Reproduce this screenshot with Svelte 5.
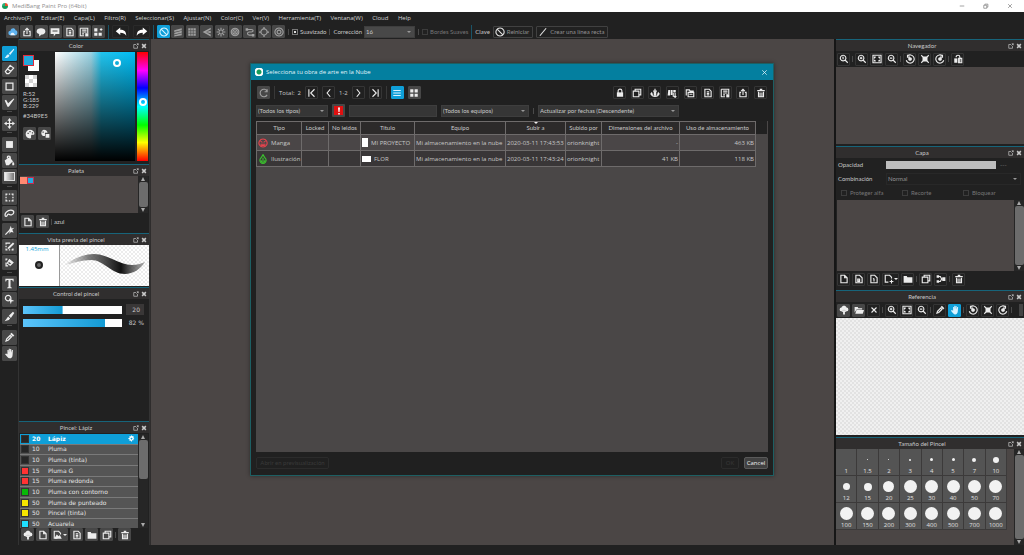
<script lang="ts">
  // s = stroked outline, f = filled shape, all on a 16x16 grid
  const icons: Record<string, { s?: string; f?: string }> = {
    share: { s: 'M5 7H3v7h10V7h-2M8 11V3M5 5l3-3 3 3' },
    bubble: { f: 'M8 2c4 0 7 2 7 5s-3 5-6 5l-4 3v-4C2 10 1 9 1 7c0-3 3-5 7-5z' },
    comment: { f: 'M1 2h14v9H9l-3 4v-4H1zM4 5v1h8V5zM4 7v1h8V7z' },
    doc: { s: 'M3 2h7l3 3v9H3zM6 6h4M6 8.500h4M6 11h4' },
    page: { s: 'M3 2h6l4 4v8H3zM9 2v4h4' },
    page8: { s: 'M3 2h6l4 4v8H3zM6 8h3v4H6zM6 10h3' },
    page1: { s: 'M3 2h6l4 4v8H3zM8 7v5M6.500 8L8 7' },
    pageAdd: { s: 'M12 7V5L9 2H2v11h5M12 9v6M9 12h6' },
    list: { s: 'M2 2h12v8M2 2v12h6M5 5h7M5 8h7M5 11h3', f: 'M10 10h5v5h-5z' },
    tiles: { s: 'M13 2v4M11 4h4', f: 'M2 2h5v5H2zM2 9h5v5H2zM9 9h5v5H9z' },
    undo: { f: 'M1 7l6-5v3c5 0 8 2 8 8-2-3-4-4-8-4v3z' },
    redo: { f: 'M15 7L9 2v3c-5 0-8 2-8 8 2-3 4-4 8-4v3z' },
    forbid: { s: 'M8 1.500a6.500 6.500 0 1 0 .1 0zM3.500 3.500l9 9' },
    slant: { f: 'M2 5l12-3v3L2 8zM2 9l12-3v3L2 12zM2 13l12-3v3L2 15z' },
    grid: { f: 'M2 2h5v5H2zM9 2h5v5H9zM2 9h5v5H2zM9 9h5v5H9z' },
    table: { s: 'M2 6h12M2 10h12M6 2v12M10 2v12', f: 'M2 2h12v12H2z' },
    vanish: { f: 'M1 8l13-7v3L6 8l8 4v3zM6 8l8-2v4z' },
    radial: { s: 'M8 1v5M8 10v5M1 8h5M10 8h5M3 3l3.500 3.500M9.500 9.500L13 13M13 3L9.500 6.500M6.500 9.500L3 13' },
    rings: { s: 'M8 2a6 6 0 1 0 .1 0zM8 4.500a3.500 3.500 0 1 0 .1 0z', f: 'M8 6.500a1.500 1.500 0 1 0 .1 0z' },
    curve: { s: 'M2 4h8c4 0 4 4 0 4H7c-4 0-4 5 0 5h6', f: 'M1 2h4v4H1zM11 11h4v4h-4z' },
    circle: { s: 'M8 3a5 5 0 1 0 .1 0z', f: 'M7 0h2v3H7zM7 13h2v3H7zM0 7h3v2H0zM13 7h3v2h-3z' },
    gear: { s: 'M8 1.500a6.500 6.500 0 1 0 .1 0zM8 5a3 3 0 1 0 .1 0z' },
    cog: { f: 'M7 1h2l.5 2 2-1 1.500 1.500-1 2 2 .5v2l-2 1 1 2-1.500 1.500-2-1L9 15H7l-.5-2.500-2 1L3 12l1-2-3-1V7l3-1-1-2 1.500-1.500 2 1zM8 6a2 2 0 1 0 .1 0z' },
    brush: { f: 'M14 1l1 1-6 8-2-2zM6 9l2 2c-1 3-4 4-7 3 2-1 2-4 5-5z' },
    eraser: { s: 'M9 2l5 4-7 8H4l-2-3zM5 7l5 4' },
    square: { s: 'M3 3h10v10H3z' },
    check: { f: 'M1 5l2-1 3 5 8-7 1 1-8 11H5z' },
    move: { s: 'M8 3v10M3 8h10', f: 'M8 0l3 4H5zM8 16l3-4H5zM0 8l4-3v6zM16 8l-4-3v6z' },
    fill: { f: 'M3 3h10v10H3z' },
    bucket: { s: 'M5 5V3c0-2 4-2 4 0v4', f: 'M1 8l7-5 5 6-6 6H3zM13 9c2 3 3 5 1 6s-3-2-1-6z' },
    select: { s: 'M3 5V3h2M7 3h2M11 3h2v2M13 7v2M13 11v2h-2M9 13H7M5 13H3v-2M3 9V7' },
    lasso: { s: 'M2 12c-2-4 3-9 8-9 6 0 5 6 1 7-3 1-3-2-5-1s-1 4-4 3z' },
    wand: { s: 'M2 14l7-7', f: 'M8 6l2-5 1 4 4-1-3 3 2 4-4-1-2 3V9z' },
    selPen: { s: 'M9 3H3v2M3 7v2M3 11v2h2M7 13h2M11 13h2v-2', f: 'M13 2l2 2-7 7-3 1 1-3z' },
    selErase: { s: 'M3 5V3h2M3 8v5h3M8 4l5 4-4 4-4-3z', f: 'M8 4l5 4-2 2-5-4z' },
    text: { f: 'M2 1h12v4h-1l-1-2H9.500v10l2 1v1h-7v-1l2-1V3H4L3 5H2z' },
    operate: { s: 'M6 2a4 4 0 1 0 .1 0z', f: 'M7 6l8 4-4 1-1 4z' },
    knife: { f: 'M13 1l2 2-5 7-3-3zM6 8l3 3-2 2-6 2z' },
    dropper: { s: 'M3 13l1-3 5-5 2 2-5 5z', f: 'M9 3l2-2 4 4-2 2z' },
    hand: { f: 'M5 9V3h1.500v4L7 1h1.500v6L9 1.500h1.500V7l1-4H13l-.5 7c0 3-2 5-4 5-3 0-4-3-7-6l1.500-1z' },
    palette: { f: 'M8 1c4 0 7 3 7 6 0 4-4 1-5 3s1 5-2 5c-4 0-7-3-7-7s3-7 7-7zM4 6v2h2V6zM7 3v2h2V3zM11 5v2h2V5z' },
    palette2: { f: 'M6 1c4 0 6 3 6 5H8v5H5C1 9 1 3 6 1zM9 8h6v6H9zM4 4v2h2V4z' },
    trash: { s: 'M4 6v8h8V6M6.500 7v6M9.500 7v6', f: 'M2 3h4V1h4v2h4v2H2z' },
    cloudUp: { f: 'M4 10a3 3 0 0 1 0-6c1-4 7-4 8 0a3 3 0 0 1 0 6h-2l-2-3-2 3zM8 7l4 4H9.500v4h-3v-4H4z' },
    folder: { f: 'M1 3h5l1 2h8v9H1z' },
    folderOpen: { f: 'M1 3h5l1 2h6v2H4l-3 5zM4 8h12l-2 6H2z' },
    copy: { s: 'M2 5h9v9H2zM5 5V2h9v9h-3' },
    image: { s: 'M12 7V5L9 2H2v11h5', f: 'M3 12l3-5 3 3 2-2 3 6H3z' },
    merge: { s: 'M4 4h3l2 4h3M4 12h3l2-4', f: 'M1 2h4v4H1zM1 10h4v4H1zM10 5h5v6h-5z' },
    reload: { s: 'M13 5a6 6 0 1 0 0 6M13 2v4H9' },
    first: { s: 'M3 2v12M12 2L6 8l6 6' },
    prev: { s: 'M10 2L5 8l5 6' },
    next: { s: 'M6 2l5 6-5 6' },
    last: { s: 'M13 2v12M4 2l6 6-6 6' },
    lines: { s: 'M2 4h12M2 8h12M2 12h12' },
    lock: { s: 'M5 8V4.500c0-3.500 6-3.500 6 0V8', f: 'M3 7h10v7H3z' },
    anchor: { s: 'M8 1v12M5 5h6M2 9c1 6 11 6 12 0', f: 'M6 6h4v6H6zM0 10l3-4 2 5zM16 10l-3-4-2 5z' },
    people: { s: 'M10 8v6M13 8v7M11 13l2 2 2-2', f: 'M2 3h3v9H1zM6 3h3v8H6zM10 3h4v4h-4z' },
    openDoc: { s: 'M2 12V3h5l1 2h6M5 7h9v7H5zM7 10h5' },
    zoomReset: { s: 'M6.500 2a4.500 4.500 0 1 0 .1 0zM10 10l4 4M6.500 4.500v4M5.500 5.500l1-1' },
    zoomIn: { s: 'M6.500 2a4.500 4.500 0 1 0 .1 0zM10 10l4 4M4.500 6.500h4M6.500 4.500v4' },
    zoomOut: { s: 'M6.500 2a4.500 4.500 0 1 0 .1 0zM10 10l4 4M4.500 6.500h4' },
    fit: { s: 'M1.500 2h13v12h-13zM4 7V5h2M10 5h2v2M12 9v2h-2M6 11H4V9' },
    rotL: { s: 'M4 3a6.500 6.500 0 1 1-2 7M4 1v4h4', f: 'M8 5a3 3 0 1 0 .1 0z' },
    rotR: { s: 'M12 3a6.500 6.500 0 1 0 2 7M12 1v4H8', f: 'M8 5a3 3 0 1 0 .1 0z' },
    reset: { s: 'M2 2l3 3M14 2l-3 3M2 14l3-3M14 14l-3-3', f: 'M4 4h8v8H4z' },
    flip: { s: 'M5 5c0-4 6-4 6 0v8M9 7h5v7H9z', f: 'M2 7h5v7H2z' },
    cross: { s: 'M4 4l8 8M12 4l-8 8' },
    float: { s: 'M8 4H2v10h10V8M10 2h4v4M14 2L9 7' },
    close: { s: 'M3 3l10 10M13 3L3 13' },
    alert: { f: 'M6 1h4l-1 9H7zM6.500 12h3v3h-3z' },
    line: { s: 'M3 14L13 2' },
    min: { s: 'M2 8h12' },
    max: { s: 'M2 6h8v8H2zM5 6V3h8v8h-3' },
    manga: { s: 'M8 1.500a6.500 6.500 0 1 0 .1 0zM4 5l3 2M12 5L9 7M4 10h8M5 12h6' },
    illus: { s: 'M8 1l3 5a5 5 0 1 1-6 0zM5 10a3 3 0 0 0 6 0M8 6v5' },
  };

  const menus = ['Archivo(F)', 'Editar(E)', 'Capa(L)', 'Filtro(R)', 'Seleccionar(S)', 'Ajustar(N)',
    'Color(C)', 'Ver(V)', 'Herramienta(T)', 'Ventana(W)', 'Cloud', 'Help'];
  const fileTools = ['share', 'bubble', 'comment', 'doc', 'list', 'tiles'];
  const snapTools = ['forbid', 'slant', 'table', 'vanish', 'radial', 'rings', 'curve', 'circle', 'gear'];
  const tools = ['brush', 'eraser', 'square', 'check', '', 'move', '', 'fill', 'bucket', 'gradient', '',
    'select', 'lasso', 'wand', 'selPen', 'selErase', '', 'text', 'operate', 'knife', '', 'dropper', 'hand'];
  const cloudTools = ['lock', 'copy', 'anchor', 'people', 'openDoc', 'doc', 'list', 'share', 'trash'];

  const brushes = [
    { color: '#262626', size: 20, name: 'Lápiz' },
    { color: '#262626', size: 10, name: 'Pluma' },
    { color: '#262626', size: 10, name: 'Pluma (tinta)' },
    { color: '#ff3333', size: 15, name: 'Pluma G' },
    { color: '#ff3333', size: 15, name: 'Pluma redonda' },
    { color: '#08b808', size: 10, name: 'Pluma con contorno' },
    { color: '#f5e500', size: 50, name: 'Pluma de punteado' },
    { color: '#f5e500', size: 50, name: 'Pincel (tinta)' },
    { color: '#1fe0ff', size: 50, name: 'Acuarela' },
  ];

  // label and drawn diameter of each preset
  const sizes: [string, number][] = [
    ['1', 0], ['1.5', 1], ['2', 1], ['3', 2], ['4', 3], ['5', 3], ['7', 4], ['10', 6],
    ['12', 7], ['15', 8], ['20', 11], ['25', 13], ['30', 13], ['40', 13], ['50', 13], ['70', 13],
    ['100', 13], ['150', 13], ['200', 13], ['300', 13], ['400', 13], ['500', 13], ['700', 13], ['1000', 13],
  ];

  const works = [
    { icon: 'manga', type: 'Manga', title: 'MI PROYECTO', date: '2020-03-11 17:43:53', dim: '-', usage: '463 KB' },
    { icon: 'illus', type: 'Ilustración', title: 'FLOR', date: '2020-03-11 17:43:24', dim: '41 KB', usage: '118 KB' },
  ];

  let activeTool = $state('brush');
  let activeBrush = $state(0);
  let brushSize = $state(40);
  let brushOpacity = $state(83);
</script>

{#snippet icon(name: string)}
  <svg class="icon" viewBox="0 0 16 16" aria-hidden="true">
    {#if icons[name].f}<path class="solid" fill-rule="evenodd" d={icons[name].f} />{/if}
    {#if icons[name].s}<path class="outline {name}" d={icons[name].s} />{/if}
  </svg>
{/snippet}

{#snippet btn(name: string, cls = '')}
  <button type="button" class="icon-button {cls}" aria-label={name}>{@render icon(name)}</button>
{/snippet}

{#snippet header(title: string)}
  <header class="panel-header">
    <h2>{title}</h2>
    <button type="button" class="plain" aria-label="float">{@render icon('float')}</button>
    <button type="button" class="plain bold" aria-label="close">{@render icon('close')}</button>
  </header>
{/snippet}

{#snippet scrollbar(cls = '')}
  <div class="scrollbar {cls}">
    <i class="up"></i>
    <i class="thumb"></i>
    <i class="down"></i>
  </div>
{/snippet}

<div class="app">
  <div class="titlebar">
    <span class="logo"></span>
    <h1>MediBang Paint Pro (64bit)</h1>
    <button type="button" class="plain" aria-label="minimize">{@render icon('min')}</button>
    <button type="button" class="plain" aria-label="maximize">{@render icon('max')}</button>
    <button type="button" class="plain" aria-label="close">{@render icon('close')}</button>
  </div>

  <nav class="menubar">
    {#each menus as menu}
      <button type="button">{menu}</button>
    {/each}
  </nav>

  <div class="toolbar">
    <div class="tools file-tools">
      <button type="button" class="icon-button raised" aria-label="cloud">
        <svg class="icon" viewBox="0 0 16 16" aria-hidden="true">
          <path fill="#5fb3f0" d="M4 13a3.500 3.500 0 0 1 0-7c1-5 7-5 8-1 4 0 4 8 0 8z" />
          <path fill="#e8f4ff" d="M4 12c0-3 5-4 6-1l2 2H4z" />
        </svg>
      </button>
      {#each fileTools as name}
        {@render btn(name, 'raised')}
      {/each}
    </div>
    <i class="bar"></i>
    <div class="tools history">
      {@render btn('undo', 'wide')}
      {@render btn('redo', 'wide')}
    </div>
    <i class="bar"></i>
    <div class="tools snap-tools">
      {#each snapTools as name}
        {@render btn(name, name === 'forbid' ? 'active' : 'raised dim')}
      {/each}
    </div>
    <i class="tick"></i>
    <label class="check"><input type="checkbox" checked />Suavizado</label>
    <i class="tick"></i>
    <label class="field">Corrección
      <span class="select correction"><select><option>16</option></select></span>
    </label>
    <i class="tick"></i>
    <label class="check off"><input type="checkbox" disabled />Bordes Suaves</label>
    <i class="bar"></i>
    <div class="field keys">
      <span>Clave</span>
      <button type="button" class="text-button">{@render icon('forbid')}Reiniciar</button>
      <button type="button" class="text-button">{@render icon('line')}Crear una línea recta</button>
    </div>
  </div>

  <main>
    <div class="toolbox">
      {#each tools as tool}
        {#if tool === ''}
          <i class="divider"></i>
        {:else}
          <button
            type="button"
            class="icon-button raised tool"
            class:active={activeTool === tool}
            aria-label={tool}
            onclick={() => (activeTool = tool)}
          >
            {#if tool === 'gradient'}<span class="gradient"></span>{:else}{@render icon(tool)}{/if}
          </button>
        {/if}
      {/each}
    </div>

    <aside class="left">
      <section class="color-panel">
        {@render header('Color')}
        <div class="color-body">
          <div class="color-info">
            <div class="swatches"><span class="front"></span><span class="back"></span></div>
            <span class="transparent"></span>
            <p>R:52<br />G:185<br />B:229</p>
            <p>#34B9E5</p>
            <div class="row">
              {@render btn('palette', 'raised')}
              {@render btn('palette2', 'raised')}
            </div>
          </div>
          <div class="spectrum"><span class="picker"></span></div>
          <div class="hue"><span class="picker"></span></div>
        </div>
      </section>

      <section class="palette-panel">
        {@render header('Paleta')}
        <div class="palette-body">
          <div class="palette-area"><span class="salmon"></span><span class="blue"></span></div>
          {@render scrollbar()}
        </div>
        <div class="row palette-actions">
          {@render btn('page', 'raised')}
          {@render btn('trash', 'raised')}
          <i class="tick"></i>
          <span>azul</span>
        </div>
      </section>

      <section class="preview-panel">
        {@render header('Vista previa del pincel')}
        <div class="preview-body">
          <div class="tip">
            <span>1.45mm</span>
            <i></i>
          </div>
          <svg viewBox="0 0 89 41" preserveAspectRatio="none" aria-hidden="true">
            <defs>
              <linearGradient id="stroke-fade">
                <stop offset="0" stop-color="#666" stop-opacity="0.100" />
                <stop offset="0.300" stop-color="#444" stop-opacity="0.700" />
                <stop offset="0.700" stop-color="#111" />
                <stop offset="1" stop-color="#444" stop-opacity="0.400" />
              </linearGradient>
            </defs>
            <path
              fill="url(#stroke-fade)"
              d="M5 20C14 13 24 9 34 9c14 0 25 11 38 11 5 0 8-1 13-3-4 7-12 12-20 12-14 0-21-14-34-14-9 0-17 3-26 5z"
            />
          </svg>
        </div>
      </section>

      <section class="control-panel">
        {@render header('Control del pincel')}
        <div class="control-row">
          <input type="range" aria-label="size" bind:value={brushSize} style="--fill: {brushSize}%" />
          <output class="box">20</output>
        </div>
        <div class="control-row">
          <input type="range" aria-label="opacity" bind:value={brushOpacity} style="--fill: {brushOpacity}%" />
          <output>82 %</output>
        </div>
      </section>

      <section class="brush-panel">
        {@render header('Pincel: Lápiz')}
        <div class="brush-body">
          <ul>
            {#each brushes as brush, i}
              <li class:current={activeBrush === i}>
                <button type="button" onclick={() => (activeBrush = i)}>
                  <i style="background: {brush.color}"></i>
                  <b>{brush.size}</b>
                  <span>{brush.name}</span>
                  {#if activeBrush === i}{@render icon('cog')}{/if}
                </button>
              </li>
            {/each}
          </ul>
          {@render scrollbar('short')}
        </div>
        <div class="row brush-actions">
          {@render btn('cloudUp', 'raised')}
          {@render btn('page', 'raised')}
          {@render btn('image', 'raised menu')}
          {@render btn('doc', 'raised')}
          {@render btn('folder', 'raised')}
          {@render btn('copy', 'raised')}
          <i class="tick"></i>
          {@render btn('trash', 'raised')}
        </div>
      </section>
    </aside>

    <div class="canvas"></div>

    <aside class="right">
      <section class="nav-panel">
        {@render header('Navegador')}
        <div class="row actions">
          {@render btn('zoomReset')}
          <i class="tick"></i>
          {@render btn('zoomIn')}
          {@render btn('fit')}
          {@render btn('zoomOut')}
          <i class="tick"></i>
          {@render btn('rotL')}
          {@render btn('reset')}
          {@render btn('rotR')}
          <i class="tick"></i>
          {@render btn('flip')}
        </div>
        <div class="empty"></div>
      </section>

      <section class="layer-panel">
        {@render header('Capa')}
        <div class="layer-form">
          <label for="opacity">Opacidad</label>
          <input id="opacity" type="range" disabled />
          <span class="dash">---</span>
          <label for="blend">Combinación</label>
          <span class="select blend"><select id="blend"><option>Normal</option></select></span>
        </div>
        <div class="layer-flags">
          <label class="check off"><input type="checkbox" disabled />Proteger alfa</label>
          <label class="check off"><input type="checkbox" disabled />Recorte</label>
          <label class="check off"><input type="checkbox" disabled />Bloquear</label>
        </div>
        <div class="layer-body">
          <div class="empty"></div>
          {@render scrollbar()}
        </div>
        <div class="row actions">
          {@render btn('page')}
          {@render btn('page8')}
          {@render btn('page1')}
          {@render btn('pageAdd', 'menu')}
          {@render btn('folder')}
          <i class="tick"></i>
          {@render btn('copy')}
          {@render btn('merge')}
          <i class="tick"></i>
          {@render btn('trash')}
        </div>
      </section>

      <section class="reference-panel">
        {@render header('Referencia')}
        <div class="row actions">
          {@render btn('cloudUp', 'raised')}
          {@render btn('folderOpen', 'raised')}
          {@render btn('cross')}
          <i class="tick"></i>
          {@render btn('zoomIn')}
          {@render btn('fit')}
          {@render btn('zoomOut')}
          <i class="tick"></i>
          {@render btn('dropper')}
          {@render btn('hand', 'active')}
          <i class="tick"></i>
          {@render btn('rotL')}
          {@render btn('reset')}
          {@render btn('rotR')}
          <i class="tick"></i>
          <i class="grip"></i>
        </div>
        <div class="checker"></div>
      </section>

      <section class="size-panel">
        {@render header('Tamaño del Pincel')}
        <div class="size-body">
          <div class="sizes">
            {#each sizes as [label, dot]}
              <button type="button">
                <span><i style="width: {dot}px; height: {dot}px"></i></span>
                {label}
              </button>
            {/each}
          </div>
          {@render scrollbar()}
        </div>
      </section>
    </aside>
  </main>

  <div class="dialog" role="dialog" aria-labelledby="dialog-title">
    <header class="dialog-title">
      <span class="logo boxed"></span>
      <h2 id="dialog-title">Selecciona tu obra de arte en la Nube</h2>
      <button type="button" class="plain" aria-label="close">{@render icon('close')}</button>
    </header>

    <div class="dialog-body">
      <div class="pager">
        {@render btn('reload', 'raised dim')}
        <i class="tick"></i>
        <span class="total">Total:&nbsp; 2</span>
        {@render btn('first')}
        {@render btn('prev')}
        <span>1-2</span>
        {@render btn('next')}
        {@render btn('last')}
        <i class="tick"></i>
        {@render btn('lines', 'active')}
        {@render btn('grid', 'raised')}
        <div class="cloud-tools">
          {#each cloudTools as name}
            {@render btn(name)}
          {/each}
        </div>
      </div>

      <div class="filters">
        <span class="select types"><select aria-label="types"><option>(Todos los tipos)</option></select></span>
        {@render btn('alert', 'raised alert')}
        <input type="text" aria-label="search" />
        <span class="select teams"><select aria-label="teams"><option>(Todos los equipos)</option></select></span>
        <i class="tick"></i>
        <span class="select order"><select aria-label="order"><option>Actualizar por fechas (Descendente)</option></select></span>
      </div>

      <div class="works">
        <table>
          <colgroup>
            <col class="w-type" /><col class="w-locked" /><col class="w-unread" /><col class="w-title" />
            <col class="w-team" /><col class="w-date" /><col class="w-user" /><col class="w-dim" /><col class="w-usage" />
          </colgroup>
          <thead>
            <tr>
              <th>Tipo</th>
              <th>Locked</th>
              <th>No leidos</th>
              <th>Título</th>
              <th>Equipo</th>
              <th class="sorted">Subir a</th>
              <th>Subido por</th>
              <th>Dimensiones del archivo</th>
              <th>Uso de almacenamiento</th>
            </tr>
          </thead>
          <tbody>
            {#each works as work}
              <tr>
                <td><div class="cell {work.icon}">{@render icon(work.icon)}{work.type}</div></td>
                <td></td>
                <td></td>
                <td><div class="cell"><i class="thumbnail {work.icon}"></i>{work.title}</div></td>
                <td>Mi almacenamiento en la nube</td>
                <td>{work.date}</td>
                <td>orionknight</td>
                <td class="num">{work.dim}</td>
                <td class="num">{work.usage}</td>
              </tr>
            {/each}
          </tbody>
        </table>
        <span class="corner"></span>
      </div>

      <footer>
        <button type="button" class="text-button preview" disabled>Abrir en previsualización</button>
        <button type="button" class="text-button ok" disabled>OK</button>
        <button type="button" class="text-button cancel">Cancel</button>
      </footer>
    </div>
  </div>
</div>

<style>
  :global(body) {
    background: #212121;
  }

  .app {
    --line: #17647a;
    --accent: #0f9fd8;
    --area: #4b4645;
    --dark: #212121;
    display: flex;
    flex-direction: column;
    position: relative;
    min-height: 100vh;
    box-sizing: border-box;
    padding-bottom: 10px;
    background: var(--dark);
    color: #c8c8c8;
    font-family: 'Open Sans', 'Noto Sans', sans-serif;
    font-size: 6px;
    line-height: 8px;
    overflow: hidden;
  }

  .app *,
  .app *::after {
    box-sizing: border-box;
  }

  button,
  select,
  input {
    margin: 0;
    padding: 0;
    border: 0;
    border-radius: 0;
    background: none;
    font: inherit;
    color: inherit;
    appearance: none;
  }

  h1,
  h2,
  p,
  ul {
    margin: 0;
    padding: 0;
    font-size: 6px;
    font-weight: 400;
    list-style: none;
  }

  i {
    display: block;
    flex: none;
  }

  .icon {
    display: block;
    flex: none;
    width: 10px;
    height: 10px;
  }

  .solid {
    fill: currentColor;
  }

  .outline {
    fill: none;
    stroke: currentColor;
    stroke-width: 1.8;
  }

  .outline.table {
    stroke: #474747;
    stroke-width: 1;
  }

  .icon-button {
    display: flex;
    flex: none;
    align-items: center;
    justify-content: center;
    width: 13px;
    height: 13px;
    border: 1px solid #353535;
    border-radius: 1px;
    color: #ececec;
  }

  .icon-button.raised {
    background: #474747;
    border-color: #474747;
  }

  .icon-button.dim {
    color: #a0a0a0;
  }

  .icon-button.active {
    background: var(--accent);
    border-color: var(--accent);
    color: #d8f2ff;
  }

  .icon-button.wide {
    width: 17px;
    border-color: #2a2a2a;
    color: #fff;
  }

  .icon-button.wide .icon {
    width: 12px;
    height: 12px;
  }

  .icon-button.menu {
    width: 17px;
  }

  .icon-button.menu::after {
    content: '';
    border: 2px solid transparent;
    border-top-color: #ececec;
    border-bottom: 0;
  }

  .icon-button.alert {
    color: #fff;
    background: #e01010;
    border: 2px solid #474747;
  }

  .icon-button.alert .icon {
    width: 8px;
    height: 8px;
  }

  .plain .icon {
    width: 6px;
    height: 6px;
  }

  .plain.bold .outline {
    stroke-width: 4;
  }

  .tick {
    width: 1px;
    height: 6px;
    background: #4a4a4a;
  }

  .bar {
    width: 1px;
    height: 14px;
    background: #1a5468;
  }

  .row {
    display: flex;
    align-items: center;
    gap: 1px;
  }

  .logo {
    flex: none;
    width: 6px;
    height: 6px;
    border-radius: 3px;
    background: conic-gradient(#e8502c 25%, #169c5a 25% 75%, #27b07a 75%);
  }

  .logo.boxed {
    width: 8px;
    height: 8px;
    border: 1px solid #fff;
    border-radius: 2px;
    background: radial-gradient(#169c5a 2px, #fff 3px);
  }

  .titlebar {
    display: flex;
    align-items: center;
    gap: 4px;
    height: 12px;
    padding: 0 11px 0 2px;
    background: #fff;
    color: #909090;
  }

  .titlebar h1 {
    flex: 1;
  }

  .titlebar .plain {
    margin-left: 14px;
    color: #777;
  }

  .menubar {
    display: flex;
    justify-content: space-between;
    width: 415px;
    height: 12px;
    padding: 0 4px;
    color: #d4d4d4;
  }

  .toolbar {
    display: flex;
    align-items: center;
    gap: 3px;
    height: 15px;
    padding: 0 6px;
  }

  .tools {
    display: flex;
    justify-content: space-between;
  }

  .file-tools {
    width: 99px;
  }

  .history {
    width: 38px;
  }

  .snap-tools {
    width: 128px;
  }

  .check,
  .field {
    display: flex;
    align-items: center;
    gap: 2px;
    font-family: Lato, 'Open Sans', sans-serif;
  }

  .check input {
    width: 6px;
    height: 6px;
    border: 1px solid #777;
  }

  .check input:checked {
    background: #ddd;
    box-shadow: inset 0 0 0 1px #222;
  }

  .off {
    color: #767676;
  }

  .off input {
    border-color: #3c3c3c;
  }

  .keys {
    gap: 3px;
  }

  .text-button {
    display: flex;
    align-items: center;
    justify-content: center;
    gap: 2px;
    height: 12px;
    padding: 0 3px 0 1px;
    border: 1px solid #414141;
    border-radius: 1px;
    color: #929292;
    white-space: nowrap;
  }

  .text-button .icon {
    color: #e0e0e0;
  }

  .select {
    display: block;
    position: relative;
    height: 12px;
    background: #363636;
    border: 1px solid #3e3e3e;
  }

  .select::after {
    content: '';
    position: absolute;
    top: 4px;
    right: 3px;
    border: 2px solid transparent;
    border-top-color: #999;
    border-bottom: 0;
  }

  .select select {
    display: block;
    width: 100%;
    height: 10px;
    padding-left: 1px;
    line-height: 8px;
  }

  .correction {
    width: 51px;
    background: #484848;
  }

  main {
    display: flex;
    flex: 1;
  }

  .toolbox {
    display: flex;
    flex-direction: column;
    align-items: center;
    justify-content: space-between;
    width: 18px;
    height: 315px;
    margin-top: 7px;
  }

  .icon-button.tool {
    width: 15px;
    height: 15px;
  }

  .tool .icon {
    width: 11px;
    height: 11px;
  }

  .divider {
    width: 5px;
    height: 3px;
    border-top: 1px solid #4c4c4c;
  }

  .gradient {
    width: 11px;
    height: 9px;
    border: 1px solid #ddd;
    background: linear-gradient(to right, #f0f0f0, #777);
  }

  .left,
  .right {
    display: flex;
    flex: none;
    flex-direction: column;
  }

  .left {
    width: 132px;
    border: 1px solid #333;
    border-width: 0 1px;
  }

  .right {
    width: 190px;
    border-left: 2px solid #161616;
  }

  .canvas {
    flex: 1;
    background: var(--area);
    border-left: 1px solid #2e2c2c;
  }

  section {
    display: flex;
    flex-direction: column;
    border-top: 1px solid var(--line);
  }

  .panel-header {
    display: flex;
    align-items: center;
    gap: 2px;
    height: 11px;
    padding: 0 2px 0 2px;
    background: #302e2e;
    font-family: Lato, 'Open Sans', sans-serif;
  }

  .panel-header h2 {
    flex: 1;
    text-align: center;
  }

  .scrollbar {
    display: flex;
    flex: none;
    flex-direction: column;
    align-items: center;
    width: 10px;
    padding: 1px 0;
    background: #262626;
  }

  .scrollbar .thumb {
    flex: 1;
    width: 9px;
    margin: 1px 0;
    border-radius: 2px;
    background: #6c6c6c;
  }

  .scrollbar .up,
  .scrollbar .down {
    border: 2px solid transparent;
  }

  .scrollbar .up {
    border-top: 0;
    border-bottom: 4px solid #aaa;
  }

  .scrollbar .down {
    border-bottom: 0;
    border-top: 4px solid #aaa;
  }

  .short .thumb {
    flex: none;
    height: 39px;
    margin-bottom: auto;
  }

  .color-panel {
    height: 125px;
  }

  .color-body {
    display: flex;
    gap: 2px;
    height: 109px;
    margin: 1px 1px 0 4px;
  }

  .color-info {
    display: flex;
    flex-direction: column;
    width: 30px;
    gap: 4px;
    padding-top: 3px;
    font-family: Lato, 'Open Sans', sans-serif;
    line-height: 6px;
  }

  .swatches {
    display: grid;
    grid-template-columns: 5px 6px 5px;
    grid-template-rows: 5px 6px 5px;
  }

  .swatches .front {
    grid-area: 1 / 1 / 3 / 3;
    z-index: 1;
    background: #22a9dc;
    border: 1px solid #e02b3c;
  }

  .swatches .back {
    grid-area: 2 / 2 / 4 / 4;
    background: #fff;
  }

  .transparent {
    width: 12px;
    height: 12px;
    margin-left: 2px;
    background: repeating-conic-gradient(#fff 0 25%, #d4d4d4 0 50%) 0 0 / 8px 8px;
  }

  .color-info .row {
    gap: 2px;
    margin-top: 4px;
  }

  .spectrum {
    position: relative;
    flex: 1;
    background:
      linear-gradient(to bottom, transparent, #000),
      linear-gradient(to right, #fff, #9ad4e4 45%, #22c4ee 58%, #00bdf5);
  }

  .hue {
    position: relative;
    width: 11px;
    background: linear-gradient(to bottom, #f00, #f0f 17%, #00f 33%, #0ff 50%, #0f0 67%, #ff0 83%, #f00);
  }

  .picker {
    position: absolute;
    width: 8px;
    height: 8px;
    border: 2px solid #fff;
    border-radius: 4px;
  }

  .spectrum .picker {
    top: 6%;
    left: 73%;
  }

  .hue .picker {
    top: 42%;
    left: 2px;
  }

  .palette-panel {
    height: 69px;
  }

  .palette-body {
    display: flex;
    height: 37px;
    margin: 0 1px;
  }

  .palette-area {
    display: flex;
    flex: 1;
    padding: 1px 0;
    background: var(--area);
  }

  .palette-area span {
    width: 7px;
    height: 7px;
  }

  .salmon {
    background: #ff8a72;
  }

  .blue {
    background: #22aee0;
    border: 1px solid #c82b50;
  }

  .palette-actions {
    gap: 2px;
    padding: 2px;
    font-family: Lato, 'Open Sans', sans-serif;
  }

  .preview-panel {
    height: 54px;
  }

  .preview-body {
    display: flex;
    height: 41px;
    background: repeating-conic-gradient(#fff 0 25%, #ececec 0 50%) 0 0 / 4px 4px;
  }

  .preview-body svg {
    flex: 1;
    min-width: 0;
  }

  .tip {
    display: flex;
    flex-direction: column;
    align-items: center;
    gap: 8px;
    width: 41px;
    background: #fff;
    border-right: 1px solid #999;
    color: var(--accent);
    padding-right: 4px;
  }

  .tip i {
    width: 8px;
    height: 8px;
    margin-left: 4px;
    border: 2px solid #222;
    border-radius: 4px;
    background: #666;
  }

  .control-panel {
    flex: 1;
    gap: 4px;
  }

  .control-panel :global(.panel-header) {
    margin-bottom: 2px;
  }

  .control-row {
    display: flex;
    align-items: center;
    height: 9px;
    padding: 0 5px 0 4px;
    gap: 4px;
  }

  .control-row input {
    flex: 1;
    min-width: 0;
    height: 8px;
    background: linear-gradient(to right, #5cc4fb, #139bd4) 0 0 / var(--fill) 100% no-repeat #fff;
  }

  input[type='range']::-webkit-slider-thumb {
    appearance: none;
    width: 1px;
    height: 8px;
  }

  .control-row output {
    width: 18px;
    height: 11px;
    line-height: 11px;
    text-align: right;
    white-space: nowrap;
    font-family: 'DejaVu Sans', sans-serif;
  }

  .control-row .box {
    padding-right: 4px;
    background: #393737;
  }

  .brush-panel {
    height: 124px;
  }

  .brush-body {
    display: flex;
    height: 94px;
    margin: 1px 1px 0;
    overflow: hidden;
  }

  .brush-body ul {
    display: grid;
    grid-auto-rows: 1fr;
    flex: 1;
    height: 96px;
    background: #555;
    font-family: 'DejaVu Sans', 'Open Sans', sans-serif;
    color: #e4e4e4;
  }

  li {
    border-bottom: 1px solid #7a7a7a;
  }

  li button {
    display: flex;
    align-items: center;
    width: 100%;
    height: 100%;
    padding: 0 3px 0 1px;
    text-align: left;
  }

  li i {
    width: 8px;
    height: 8px;
    border: 1px solid #333;
  }

  li b {
    width: 19px;
    padding-left: 3px;
    font-weight: 400;
  }

  li span {
    flex: 1;
  }

  .current {
    background: var(--accent);
    color: #fff;
    font-weight: 700;
  }

  .current b {
    font-weight: 700;
  }

  li .icon {
    width: 7px;
    height: 7px;
  }

  .brush-actions {
    gap: 2px;
    padding: 0 2px;
  }

  .empty {
    flex: 1;
    background: var(--area);
  }

  .actions {
    gap: 2px;
    height: 16px;
    padding: 0 1px;
  }

  .nav-panel {
    height: 107px;
    padding-bottom: 2px;
  }

  .layer-panel {
    height: 144px;
    padding-bottom: 3px;
  }

  .layer-form {
    display: grid;
    grid-template-columns: 48px 110px 1fr;
    grid-auto-rows: 14px;
    align-items: center;
    padding: 0 3px 0 2px;
    font-family: Lato, 'Open Sans', sans-serif;
  }

  .layer-form input {
    height: 8px;
    background: #bdbdbd;
  }

  .dash {
    padding-left: 4px;
    color: #777;
  }

  .blend {
    grid-column: 2 / 4;
    background: none;
    border-color: #282828;
    color: #959595;
  }

  .layer-flags {
    display: grid;
    grid-template-columns: repeat(3, 61px);
    height: 13px;
    padding-left: 5px;
  }

  .layer-flags .check {
    gap: 3px;
  }

  .layer-body {
    display: flex;
    flex: 1;
    margin: 1px 0 0 1px;
  }

  .reference-panel {
    flex: 1;
    padding-bottom: 2px;
  }

  .grip {
    width: 4px;
    height: 12px;
    margin-left: auto;
    background: #444;
  }

  .checker {
    flex: 1;
    background: repeating-conic-gradient(#f0f0f0 0 25%, #e2e2e2 0 50%) 0 0 / 4px 4px;
  }

  .size-panel {
    height: 108px;
  }

  .size-body {
    display: flex;
    flex: 1;
    justify-content: space-between;
    background: var(--area);
  }

  .sizes {
    display: grid;
    grid-template-columns: repeat(8, 1fr);
    grid-auto-rows: 27px;
    align-content: start;
    width: 171px;
  }

  .sizes button {
    display: flex;
    flex-direction: column;
    align-items: center;
    background: #545454;
    border: 1px solid #3c3a3a;
    border-width: 0 1px 1px 0;
    color: #e0e0e0;
  }

  .sizes span {
    display: flex;
    align-items: center;
    height: 18px;
    padding-top: 3px;
  }

  .sizes i {
    border-radius: 50%;
    background: #f2f2f2;
  }

  .dialog {
    display: flex;
    flex-direction: column;
    position: absolute;
    inset: 63px 250px 79px;
    background: #202020;
    border: 1px solid #1d5f63;
    box-shadow: 0 0 4px #0006;
  }

  .dialog-title {
    display: flex;
    align-items: center;
    gap: 3px;
    height: 16px;
    padding: 0 5px 0 4px;
    background: #047f9f;
    color: #e0f4fa;
  }

  .dialog-title h2 {
    flex: 1;
  }

  .dialog-title .icon {
    width: 7px;
    height: 7px;
  }

  .dialog-body {
    display: flex;
    flex: 1;
    flex-direction: column;
    gap: 4px;
    padding: 6px 5px;
  }

  .pager,
  .filters,
  footer {
    display: flex;
    align-items: center;
    gap: 5px;
    height: 13px;
  }

  .pager {
    margin-bottom: 1px;
    gap: 4px;
    padding: 0 1px;
  }

  .pager .tick {
    height: 13px;
    background: #383838;
  }

  .total {
    width: 22px;
    white-space: nowrap;
  }

  .cloud-tools {
    display: flex;
    justify-content: space-between;
    width: 154px;
    margin-left: auto;
  }

  .filters input {
    width: 88px;
    height: 12px;
    background: #363636;
    border: 1px solid #3e3e3e;
  }

  .filters {
    gap: 4px;
    font-family: Lato, 'Open Sans', sans-serif;
  }

  .types {
    width: 72px;
  }

  .teams {
    width: 88px;
  }

  .order {
    width: 141px;
  }

  .works {
    display: flex;
    flex: 1;
    align-items: flex-start;
    background: #4a4747;
  }

  .corner {
    width: 11px;
    height: 13px;
    background: #212121;
  }

  table {
    width: 499px;
    table-layout: fixed;
    border-collapse: collapse;
  }

  .w-type {
    width: 45px;
  }

  .w-locked {
    width: 27px;
  }

  .w-unread {
    width: 32px;
  }

  .w-title {
    width: 54px;
  }

  .w-team {
    width: 91px;
  }

  .w-date {
    width: 60px;
  }

  .w-user {
    width: 36px;
  }

  .w-dim {
    width: 78px;
  }

  .w-usage {
    width: 76px;
  }

  th,
  td {
    padding: 0 1px;
    border: 1px solid #6e6b6b;
    white-space: nowrap;
  }

  th {
    position: relative;
    height: 13px;
    background: #2c2a2a;
    font-family: Lato, 'Open Sans', sans-serif;
    font-weight: 400;
  }

  .sorted::after {
    content: '';
    position: absolute;
    top: 0;
    left: calc(50% - 2px);
    border: 2px solid transparent;
    border-top-color: #eee;
    border-bottom: 0;
  }

  td {
    height: 16px;
  }

  tbody tr {
    background: #4a4647;
  }

  tbody tr:nth-child(2) {
    background: #393637;
  }

  .cell {
    display: flex;
    align-items: center;
    gap: 3px;
  }

  .cell.manga .icon {
    color: #e8434d;
  }

  .cell.illus .icon {
    color: #3bc22e;
  }

  .thumbnail {
    background: #fff;
  }

  .thumbnail.manga {
    width: 6px;
    height: 9px;
  }

  .thumbnail.illus {
    width: 9px;
    height: 6px;
  }

  .num {
    text-align: right;
  }

  footer .text-button {
    padding: 0 4px;
    border-radius: 2px;
  }

  footer .text-button:disabled {
    border-color: #2b2b2b;
    color: #3a3a3a;
  }

  footer .text-button.preview {
    width: 73px;
    margin-right: auto;
    padding: 0;
    font-family: Lato, 'Open Sans', sans-serif;
  }

  .text-button.ok {
    width: 18px;
  }

  footer .text-button.cancel {
    width: 24px;
    padding: 0;
    background: #414141;
    border-color: #5a5a5a;
    color: #f0f0f0;
  }
</style>
